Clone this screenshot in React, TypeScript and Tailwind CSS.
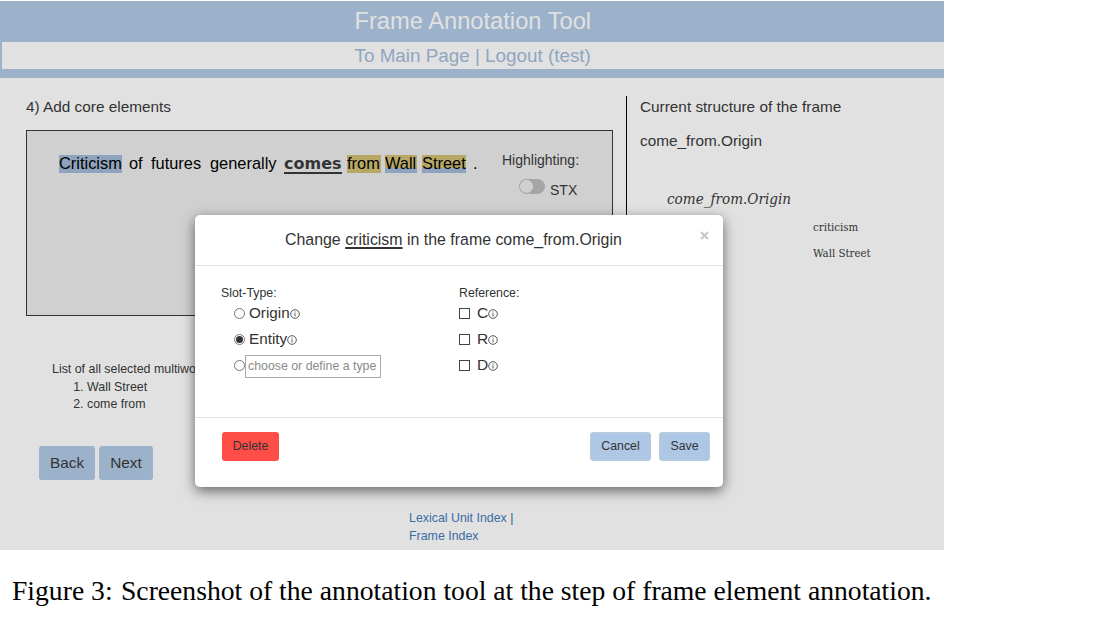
import type { ReactNode } from "react";

function Info() {
  return (
    <svg width="10" height="10" viewBox="0 0 10 10" className="mt-[2px] shrink-0" fill="none" stroke="#444">
      <circle cx="5" cy="5" r="4.3" strokeWidth="0.9" />
      <path d="M5 4.3V7.4M5 2.5v1" strokeWidth="0.9" />
    </svg>
  );
}

function Radio({ checked = false }: { checked?: boolean }) {
  return (
    <span className="flex size-[11px] shrink-0 items-center justify-center rounded-full border border-[#777] bg-white">
      {checked && <span className="size-[7px] rounded-full bg-[#333]" />}
    </span>
  );
}

function Check({ label }: { label: string }) {
  return (
    <div className="flex h-[26px] items-center">
      <span className="size-[11px] border border-[#444] bg-white" />
      <span className="ml-[7px] text-[15.5px]">{label}</span>
      <Info />
    </div>
  );
}

function Button({ children, className }: { children: ReactNode; className: string }) {
  return <button className={`flex items-center justify-center rounded-[3px] ${className}`}>{children}</button>;
}

function Header() {
  return (
    <header className="h-[77px] bg-[#9cb1ca]">
      <h1 className="h-[41px] pl-[354.5px] text-[23.7px] leading-[40px] text-[#e1e1e1]">Frame Annotation Tool</h1>
      <nav className="ml-[2px] h-[27px] bg-[#e1e1e1] pl-[352.5px] text-[18.85px] leading-[27px] text-[#8fa6c0]">
        To Main Page | Logout (test)
      </nav>
    </header>
  );
}

function Sentence() {
  return (
    <div className="flex h-[186px] w-[587px] border border-[#333] bg-[#d0d0d0]">
      <p className="ml-[32px] mt-[24px] flex h-[18px] w-[443px] text-[16.4px] leading-[17px] text-black">
        <span className="w-[63px] bg-[#8fa3be]">Criticism</span>
        <span className="ml-[7px] w-[15px]">of</span>
        <span className="ml-[7px] w-[51px]">futures</span>
        <span className="ml-[8px] w-[67px]">generally</span>
        <span className="ml-[7px] h-[19px] w-[58px] border-b-2 border-[#333] font-['DejaVu_Sans',sans-serif] text-[16px] font-bold text-[#333]">comes</span>
        <span className="ml-[5px] w-[34px] bg-[#b8a865]">from</span>
        <span className="ml-[4px] w-[32px] bg-linear-to-b from-[#b8a865] from-72% to-[#8fa3be] to-72%">Wall</span>
        <span className="ml-[5px] w-[44px] bg-linear-to-b from-[#b8a865] from-72% to-[#8fa3be] to-72%">Street</span>
        <span className="ml-[7px]">.</span>
      </p>
      <div className="mt-[19px] text-[14px] text-[#333]">
        <p className="leading-[20px]">Highlighting:</p>
        <div className="ml-[17px] mt-[6px] flex">
          <span className="mt-[3px] flex h-[15px] w-[26px] rounded-full bg-[#a6a6a6] p-[1px]">
            <span className="size-[13px] rounded-full bg-[#d0d0d0]" />
          </span>
          <span className="ml-[5px] mt-[4px] leading-[20px]">STX</span>
        </div>
      </div>
    </div>
  );
}

function Modal() {
  return (
    <section className="absolute left-[195px] top-[214px] h-[272px] w-[528px] rounded-[5px] bg-white text-[#333] shadow-[0_4px_13px_rgba(0,0,0,0.55)]">
      <div className="flex h-[51px] border-b border-[#e2e2e2]">
        <h2 className="ml-[90px] mt-[14px] w-[415px] text-[15.92px] leading-[21px]">
          Change <span className="underline decoration-2 underline-offset-2">criticism</span> in the frame come_from.Origin
        </h2>
        <svg width="9" height="9" viewBox="0 0 9 9" className="mt-[16px]">
          <path d="M1 1l7 7M8 1L1 8" stroke="#c8c8c8" strokeWidth="2.2" />
        </svg>
      </div>
      <div className="flex h-[152px] border-b border-[#e2e2e2] pl-[26px] pt-[19px]">
        <div className="w-[238px]">
          <p className="h-[15px] text-[12.35px] leading-[17px]">Slot-Type:</p>
          <div className="pl-[13px] text-[15.25px]">
            <div className="flex h-[26px] items-center"><Radio /><span className="ml-[4px]">Origin</span><Info /></div>
            <div className="flex h-[26px] items-center"><Radio checked /><span className="ml-[4px]">Entity</span><Info /></div>
            <div className="flex h-[26px] items-center">
              <Radio />
              <span className="mt-[2px] flex h-[23px] w-[136px] items-center whitespace-nowrap border border-[#aaa] pl-[2px] text-[12.35px] text-[#8a8a8a]">
                choose or define a type
              </span>
            </div>
          </div>
        </div>
        <div>
          <p className="h-[15px] text-[12.35px] leading-[17px]">Reference:</p>
          <Check label="C" />
          <Check label="R" />
          <Check label="D" />
        </div>
      </div>
      <div className="flex pl-[27px] pr-[13px] pt-[14px] text-[12.3px]">
        <Button className="mr-auto h-[29px] w-[57px] bg-[#ff4d48]">Delete</Button>
        <Button className="mr-[8px] h-[29px] w-[61px] border border-[#bccbdb] bg-[#adc7e4]">Cancel</Button>
        <Button className="h-[29px] w-[51px] border border-[#bccbdb] bg-[#adc7e4]">Save</Button>
      </div>
    </section>
  );
}

export default function App() {
  return (
    <div className="h-[644px] overflow-hidden bg-white pt-[1px] font-['Liberation_Sans',Arial,sans-serif] text-[#333]">
      <div className="relative h-[549px] w-[944px] bg-[#e1e1e1]">
        <Header />
        <div className="flex h-[472px] pt-[18px]">
          <main className="w-[626px] pl-[26px]">
            <h2 className="h-[34px] text-[15.35px] leading-[21px]">4) Add core elements</h2>
            <Sentence />
            <div className="ml-[26px] mt-[45px] h-[53px] text-[12.4px] leading-[17.7px]">
              <p>List of all selected multiwords:</p>
              <ol className="list-decimal pl-[35px]">
                <li>Wall Street</li>
                <li>come from</li>
              </ol>
            </div>
            <div className="ml-[13px] mt-[32px] flex gap-[4px] text-[15.35px]">
              <Button className="h-[34px] w-[56px] bg-[#9cb1ca]">Back</Button>
              <Button className="h-[34px] w-[54px] bg-[#9cb1ca]">Next</Button>
            </div>
            <footer className="ml-[383px] mt-[30px] text-[12.4px] leading-[17.5px] text-[#3a6da3]">
              <p>Lexical Unit Index <span className="text-[#2c5a86]">|</span></p>
              <p>Frame Index</p>
            </footer>
          </main>
          <aside className="h-[300px] border-l border-black pl-[13px]">
            <h2 className="text-[15.35px] leading-[21px]">Current structure of the frame</h2>
            <p className="mt-[13px] text-[15.35px] leading-[21px]">come_from.Origin</p>
            <div className="pl-[27px] font-['DejaVu_Serif_Condensed','DejaVu_Serif',serif]">
              <p className="mt-[38px] text-[15.1px] italic leading-[21px]">come_from.Origin</p>
              <ul className="pl-[146px] pt-[4px] text-[11.4px] leading-[26px]">
                <li>criticism</li>
                <li>Wall Street</li>
              </ul>
            </div>
          </aside>
        </div>
        <Modal />
      </div>
      <p className="ml-[12px] mt-[24px] whitespace-nowrap font-['Liberation_Serif',serif] text-[27.65px] leading-[34px] text-black">
        <span className="mr-[1.5px]">Figure 3:</span> Screenshot of the annotation tool at the step of frame element annotation.
      </p>
    </div>
  );
}
